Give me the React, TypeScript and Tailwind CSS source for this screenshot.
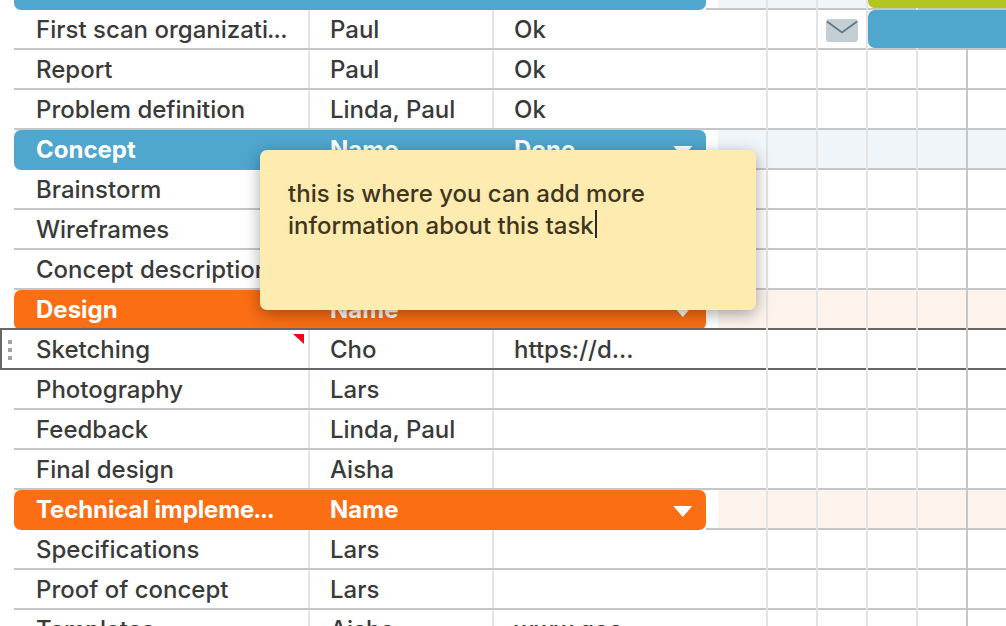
import clsx from 'clsx';

type Row = {
  name: string;
  cut?: boolean;
  who?: string;
  status?: string;
  group?: 'blue' | 'orange';
  selected?: boolean;
  bar?: 'blue' | 'green';
  mail?: boolean;
};

const rows: Row[] = [
  { name: '', group: 'blue', bar: 'green' },
  { name: 'First scan organizati', cut: true, who: 'Paul', status: 'Ok', bar: 'blue', mail: true },
  { name: 'Report', who: 'Paul', status: 'Ok' },
  { name: 'Problem definition', who: 'Linda, Paul', status: 'Ok' },
  { name: 'Concept', who: 'Name', status: 'Done', group: 'blue' },
  { name: 'Brainstorm' },
  { name: 'Wireframes' },
  { name: 'Concept description' },
  { name: 'Design', who: 'Name', group: 'orange' },
  { name: 'Sketching', who: 'Cho', status: 'https://d...', selected: true },
  { name: 'Photography', who: 'Lars' },
  { name: 'Feedback', who: 'Linda, Paul' },
  { name: 'Final design', who: 'Aisha' },
  { name: 'Technical impleme', cut: true, who: 'Name', group: 'orange' },
  { name: 'Specifications', who: 'Lars' },
  { name: 'Proof of concept', who: 'Lars' },
  { name: 'Templates', who: 'Aisha', status: 'www.goo...' },
];

const days = [0, 1, 2, 3, 4, 5];

function MailIcon() {
  return (
    <svg width="32" height="23" viewBox="0 0 32 23" fill="none">
      <rect width="32" height="23" rx="3" fill="#c4cfd3" />
      <path d="M1 2.5 16 13.5 31 2.5" stroke="#5f7885" strokeWidth="1.8" />
    </svg>
  );
}

function GroupRow({ row }: { row: Row }) {
  return (
    <div
      className={clsx(
        'flex h-10 w-[692px] items-center rounded-[7px] font-bold text-white',
        row.group === 'blue' ? 'bg-[#4fa6ce]' : 'bg-[#fb6e14]',
      )}
    >
      <span className="w-[294px] pl-[22px]">
        {row.cut ? <span className="tracking-[-0.1px]">{row.name}</span> : row.name}
        {row.cut && <span className="-ml-px tracking-[-1.3px]">...</span>}
      </span>
      <span className="w-[184px] pl-[22px]">{row.who}</span>
      <span className="flex-1 pl-[22px]">{row.status}</span>
      <svg className="mt-[3px] mr-[13px]" width="20" height="12" viewBox="0 0 20 12" fill="#fff">
        <path d="M0.3 0H19.3L9.8 11Z" />
      </svg>
    </div>
  );
}

function TaskRow({ row }: { row: Row }) {
  return (
    <div className="flex h-[38px] w-[692px] text-[#3a3a3a]">
      <div className="flex w-[296px] items-center justify-between border-r-2 border-[#e4e4e4] pl-[22px]">
        <span className="pt-0.5">
          {row.name}
          {row.cut && <span className="-ml-px tracking-[-0.7px]">...</span>}
        </span>
        {row.selected && (
          <svg className="mt-1 mr-1 self-start" width="11" height="10" viewBox="0 0 11 10" fill="#f8001a">
            <path d="M0 0H11V10Z" />
          </svg>
        )}
      </div>
      <div className="flex w-[184px] items-center border-r-2 border-[#e4e4e4] pl-5">
        <span className="pt-0.5">{row.who}</span>
      </div>
      <div className="flex flex-1 items-center pl-5">
        <span className="pt-0.5">{row.status}</span>
      </div>
    </div>
  );
}

function Timeline({ row, line }: { row: Row; line: string }) {
  return (
    <div className="relative flex flex-1">
      {days.map((d) => (
        <div key={d} className={clsx('flex h-10 shrink-0', d === 5 ? 'flex-1' : 'w-[50px]')}>
          <div
            className={clsx(
              'flex flex-1 justify-center border-b-2',
              line,
              row.group === 'blue' && 'bg-[#f0f5fa]',
              row.group === 'orange' && 'bg-[#fcf3ec]',
            )}
          >
            {row.mail && d === 2 && (
              <div className="mt-[8.5px] shrink-0">
                <MailIcon />
              </div>
            )}
          </div>
          {d < 5 && <div className={clsx('w-0.5', d === 4 ? 'bg-[#c6c6c6]' : 'bg-[#e4e4e4]')} />}
        </div>
      ))}
      {row.bar && (
        <div
          className={clsx(
            'absolute top-0 right-0 left-[150px] h-[38px] rounded-l-[7px]',
            row.bar === 'blue' ? 'bg-[#4fa6ce]' : 'bg-[#b1c61e]',
          )}
        />
      )}
    </div>
  );
}

function Note() {
  return (
    <div className="absolute top-[150px] left-[260px] h-40 w-[496px] rounded-[7px] bg-[#feebb0] px-7 pt-7 leading-8 text-[#3f3520] shadow-[0_4px_16px_rgba(0,0,0,0.35)]">
      this is where you can add more
      <br />
      information about this task
      <span className="-mb-1 ml-px inline-block h-7 w-0.5 bg-[#2b2b2b]" />
    </div>
  );
}

export default function App() {
  return (
    <div className="relative h-[626px] w-[1006px] overflow-hidden bg-white font-['Inter',sans-serif] text-2xl font-medium whitespace-nowrap">
      <div className="-mt-[30px]">
        {rows.map((row, i) => {
          const dark = row.selected || rows[i + 1]?.selected;
          const line = dark ? 'border-[#686666]' : 'border-[#c6c6c6]';
          return (
            <div key={i} className="flex h-10">
              <div
                className={clsx(
                  'flex w-3.5 items-center',
                  dark && 'border-b-2 border-[#686666]',
                  row.selected && 'border-l-2',
                )}
              >
                {row.selected && (
                  <div className="mt-0.5 ml-1.5 flex flex-col gap-1">
                    <i className="size-1 bg-[#a3a3a3]" />
                    <i className="size-1 bg-[#a3a3a3]" />
                    <i className="size-1 bg-[#a3a3a3]" />
                  </div>
                )}
              </div>
              <div className={clsx('h-10 overflow-hidden', (!row.group || dark) && 'border-b-2', line)}>
                {row.group ? <GroupRow row={row} /> : <TaskRow row={row} />}
              </div>
              <div className={clsx('w-3 border-b-2', line)} />
              <Timeline row={row} line={line} />
            </div>
          );
        })}
      </div>
      <Note />
    </div>
  );
}
